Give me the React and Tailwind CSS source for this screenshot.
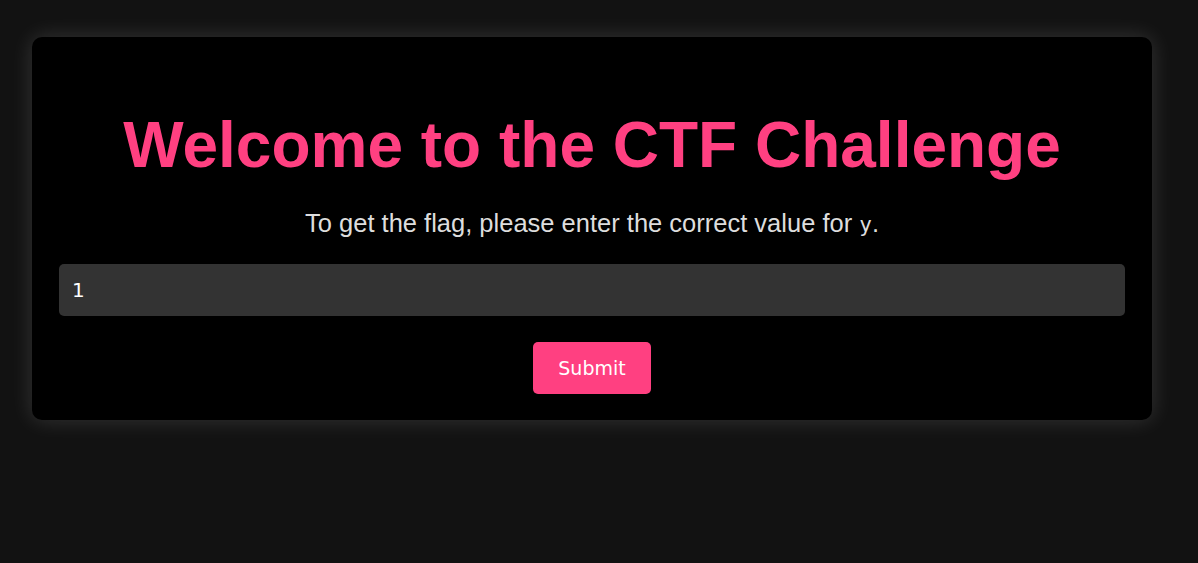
export default function App() {
  return (
    <div className="min-h-[563px] w-full bg-[#121212] pt-[37px] font-['Liberation_Sans',Arial,sans-serif]">
      <div className="ml-[32px] w-[1120px] rounded-[10px] bg-black px-[27px] pt-[71px] pb-[26px] shadow-[0_0_22px_rgba(255,255,255,0.15)] flex flex-col items-center">
        <h1 className="text-[64px] leading-[74px] font-bold text-[#ff4081] text-center whitespace-nowrap">
          Welcome to the CTF Challenge
        </h1>
        <p className="mt-[27px] text-[25.5px] leading-[29px] text-[#dddddd] text-center">
          To get the flag, please enter the correct value for{' '}
          <code className="text-[21px] font-['DejaVu_Sans_Mono',monospace]">y</code>.
        </p>
        <input
          type="text"
          defaultValue="1"
          className="mt-[24px] h-[52px] w-full rounded-[5px] bg-[#333333] px-[13px] text-[20px] text-white outline-none font-['DejaVu_Sans',sans-serif]"
        />
        <button className="mt-[26px] h-[52px] w-[118px] rounded-[5px] bg-[#ff4081] text-[19px] text-white font-['DejaVu_Sans',sans-serif]">
          Submit
        </button>
      </div>
    </div>
  );
}
